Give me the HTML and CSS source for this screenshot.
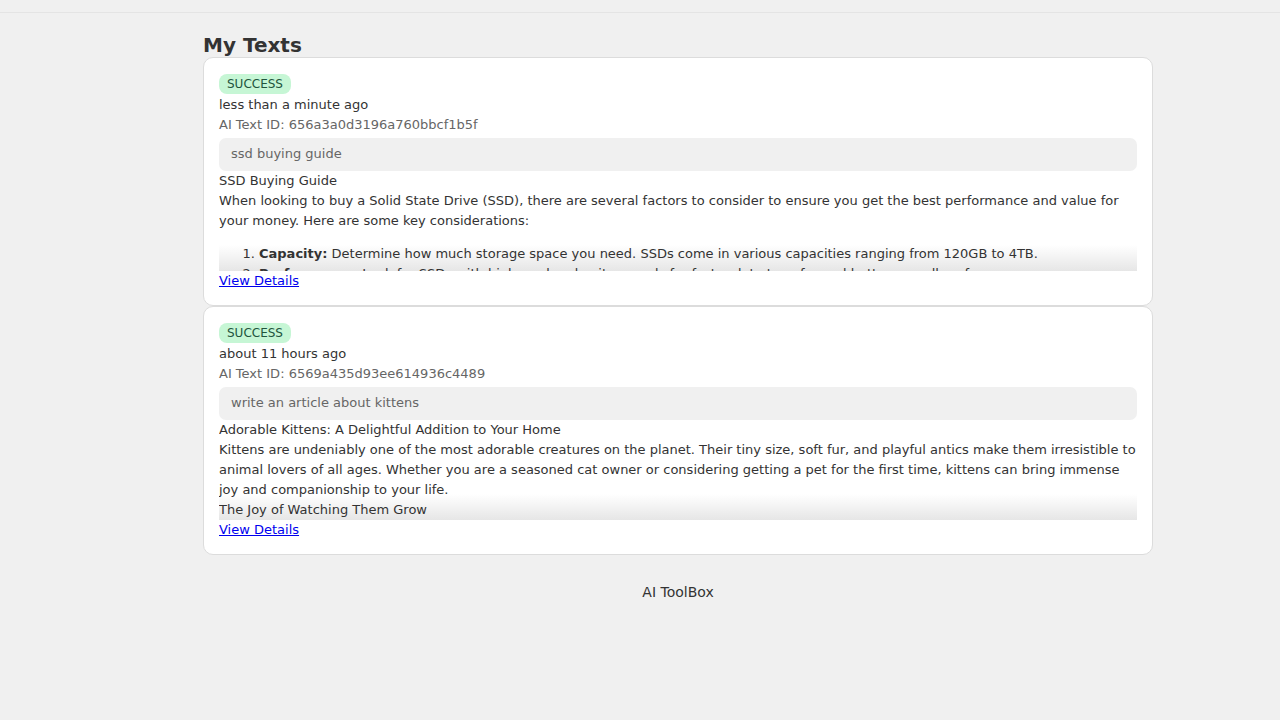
FILE: index.html
```html
<!DOCTYPE html>
<html lang="en">
<head>
<meta charset="utf-8">
<title>My Texts</title>
<link rel="stylesheet" href="styles.css">
</head>
<body>
<header class="topbar"></header>
<main class="container">
  <h1 class="page-title">My Texts</h1>
  <div class="list">
    <article class="card">
      <span class="badge">SUCCESS</span>
      <div class="time">less than a minute ago</div>
      <div class="meta">AI Text ID: 656a3a0d3196a760bbcf1b5f</div>
      <div class="prompt">ssd buying guide</div>
      <div class="preview">
        <p>SSD Buying Guide</p>
        <p>When looking to buy a Solid State Drive (SSD), there are several factors to consider to ensure you get the best performance and value for your money. Here are some key considerations:</p>
        <ol>
          <li><strong>Capacity:</strong> Determine how much storage space you need. SSDs come in various capacities ranging from 120GB to 4TB.</li>
          <li><strong>Performance:</strong> Look for SSDs with high read and write speeds for faster data transfer and better overall performance.</li>
        </ol>
      </div>
      <a class="details" href="#">View Details</a>
    </article>
    <article class="card">
      <span class="badge">SUCCESS</span>
      <div class="time">about 11 hours ago</div>
      <div class="meta">AI Text ID: 6569a435d93ee614936c4489</div>
      <div class="prompt">write an article about kittens</div>
      <div class="preview">
        <p>Adorable Kittens: A Delightful Addition to Your Home</p>
        <p>Kittens are undeniably one of the most adorable creatures on the planet. Their tiny size, soft fur, and playful antics make them irresistible to animal lovers of all ages. Whether you are a seasoned cat owner or considering getting a pet for the first time, kittens can bring immense joy and companionship to your life.</p>
        <p>The Joy of Watching Them Grow</p>
        <p>Watching a kitten grow is a rewarding experience.</p>
      </div>
      <a class="details" href="#">View Details</a>
    </article>
  </div>
  <footer class="footer">AI ToolBox</footer>
</main>
</body>
</html>
```

FILE: styles.css
```css
* { box-sizing: border-box; }

body {
  margin: 0;
  background: #f0f0f0;
  font-family: "DejaVu Sans", "Liberation Sans", sans-serif;
  font-size: 13px;
  line-height: 20px;
  color: #333;
}

.topbar {
  height: 13px;
  border-bottom: 1px solid #e4e4e4;
}

.container {
  width: 950px;
  margin-left: calc(50% - 437px);
  padding-top: 20px;
}

.page-title {
  margin: 0;
  font-size: 20px;
  line-height: 24px;
  font-weight: bold;
  color: #333;
}

.list {
  display: flex;
  flex-direction: column;
}

.card {
  background: #fff;
  border: 1px solid #dcdcdc;
  border-radius: 10px;
  padding: 16px 15px 14px;
  display: flex;
  flex-direction: column;
  align-items: flex-start;
}

.badge {
  display: inline-block;
  background: #c6f6d5;
  color: #22543d;
  font-size: 12px;
  line-height: 20px;
  padding: 0 8px;
  margin-bottom: 1px;
  border-radius: 8px;
}

.time { color: #333; }

.meta { color: #666; }

.prompt {
  align-self: stretch;
  margin-top: 3px;
  background: #f0f0f0;
  color: #666;
  border-radius: 7px;
  padding: 6px 12px 7px;
}

.preview {
  align-self: stretch;
  height: 100px;
  overflow: hidden;
  background: linear-gradient(to bottom, #fff 74px, #e6e6e6 100%);
}

.preview p { margin: 0; }

.preview ol {
  margin: 13px 0;
  padding-left: 40px;
}

.details {
  color: #0000ee;
  text-decoration: underline;
}

.footer {
  text-align: center;
  font-size: 14px;
  line-height: 20px;
  margin-top: 27px;
  color: #333;
}
```
